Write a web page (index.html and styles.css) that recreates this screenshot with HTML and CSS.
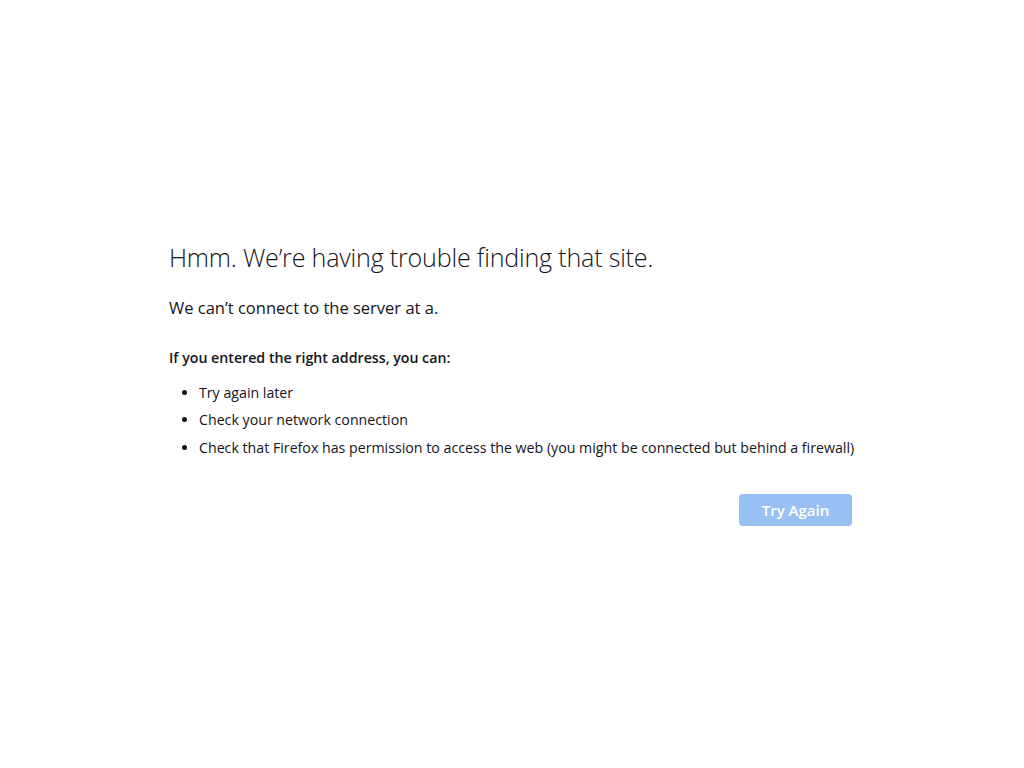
FILE: index.html
```html
<!DOCTYPE html>
<html lang="en">
<head>
<meta charset="utf-8">
<title>Problem loading page</title>
<link rel="stylesheet" href="styles.css">
</head>
<body>
<main class="page">
  <div class="container">
    <h1 class="title">Hmm. We’re having trouble finding that site.</h1>
    <p class="short-desc">We can’t connect to the server at a.</p>
    <p class="advice">If you entered the right address, you can:</p>
    <ul class="tips">
      <li>Try again later</li>
      <li>Check your network connection</li>
      <li>Check that Firefox has permission to access the web (you might be connected but behind a firewall)</li>
    </ul>
    <div class="actions">
      <button class="btn-primary" type="button">Try Again</button>
    </div>
  </div>
</main>
</body>
</html>
```

FILE: styles.css
```css
html, body {
  margin: 0;
  padding: 0;
  background: #ffffff;
}
body {
  font-family: "Open Sans", "Noto Sans", sans-serif;
  color: #15141a;
  font-size: 15px;
}
.page {
  min-height: 768px;
  display: flex;
  align-items: center;
  justify-content: center;
}
.container {
  width: 683px;
  margin-left: -3px;
  padding-bottom: 2px;
}
.title {
  margin: 0;
  font-weight: 300;
  font-size: 25.1px;
  line-height: 32px;
  letter-spacing: -0.2px;
}
.short-desc {
  margin: 24px 0 0;
  font-size: 16.5px;
  line-height: 22px;
}
.advice {
  margin: 28px 0 0;
  font-size: 14.2px;
  font-weight: 600;
  line-height: 22px;
}
.tips {
  margin: 14px 0 0;
  padding-left: 30px;
  font-size: 14.2px;
  line-height: 20px;
}
.tips li {
  margin-bottom: 7.5px;
  white-space: nowrap;
}
.tips li:last-child {
  margin-bottom: 0;
}
.actions {
  display: flex;
  justify-content: flex-end;
  margin-top: 36px;
}
.btn-primary {
  font-family: inherit;
  font-size: 15px;
  font-weight: 600;
  color: #ffffff;
  background: #99c0f3;
  border: none;
  border-radius: 4px;
  width: 113px;
  height: 32px;
  padding: 0;
}
```
